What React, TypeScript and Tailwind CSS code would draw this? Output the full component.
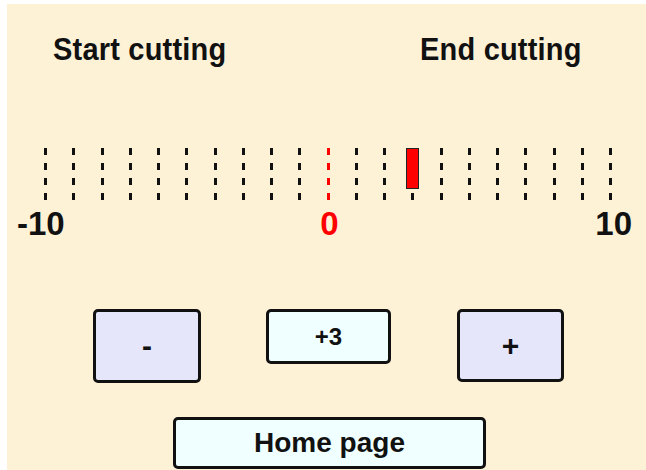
import React from 'react';

const FONT = '"Liberation Sans", Arial, sans-serif';

const TICKS = Array.from({ length: 21 }, (_, i) => i - 10);
const VALUE = 3;

const Tick: React.FC<{ v: number }> = ({ v }) => {
  const red = v === 0;
  return (
    <div className="relative w-[3px] h-[52px]">
      <div
        className={
          red
            ? 'w-full h-full bg-[repeating-linear-gradient(to_bottom,#ff0000_0_7px,transparent_7px_15px)]'
            : 'w-full h-full bg-[repeating-linear-gradient(to_bottom,#111_0_7px,transparent_7px_15px)]'
        }
      />
      {v === VALUE && (
        <div className="absolute left-[-5px] top-0 w-[13px] h-[41px] bg-[#ff0000] border border-[#222]" />
      )}
    </div>
  );
};

export default function App() {
  return (
    <div className="w-[646px] h-[470px] bg-white flex pl-[7px] pt-[4px] overflow-hidden" style={{ fontFamily: FONT }}>
      <div className="flex-1 bg-[#fdf1d6] flex flex-col text-[#111] font-bold">
        {/* titles */}
        <div className="flex mt-[31px] pl-[46px] text-[29px] leading-none tracking-[0.2px]">
          <span className="w-[367px] inline-block scale-y-[1.08]">Start cutting</span>
          <span className="inline-block scale-y-[1.08]">End cutting</span>
        </div>

        {/* scale */}
        <div className="flex justify-between ml-[37px] w-[568px] mt-[84px]">
          {TICKS.map(v => (
            <Tick key={v} v={v} />
          ))}
        </div>

        {/* labels */}
        <div className="grid grid-cols-[293px_39px_283px] ml-[10px] mt-[7px] text-[33px] leading-none">
          <span>-10</span>
          <span className="text-center text-[#ff0000]">0</span>
          <span className="text-right">10</span>
        </div>

        {/* controls */}
        <div className="flex items-start pl-[86px] mt-[69px] gap-[65px]">
          <button className="w-[108px] h-[74px] bg-[#e6e6fa] border-[3px] border-[#111] rounded-[5px] text-[30px] leading-none">
            -
          </button>
          <button className="w-[125px] h-[55px] bg-[#f0ffff] border-[3px] border-[#111] rounded-[5px] text-[24px] leading-none">
            +3
          </button>
          <button className="w-[107px] h-[73px] ml-px bg-[#e6e6fa] border-[3px] border-[#111] rounded-[5px] text-[30px] leading-none">
            +
          </button>
        </div>

        <div className="pl-[166px] mt-[34px]">
          <button className="w-[313px] h-[52px] bg-[#f0ffff] border-[3px] border-[#111] rounded-[5px] text-[28px] leading-none">
            Home page
          </button>
        </div>
      </div>
    </div>
  );
}
